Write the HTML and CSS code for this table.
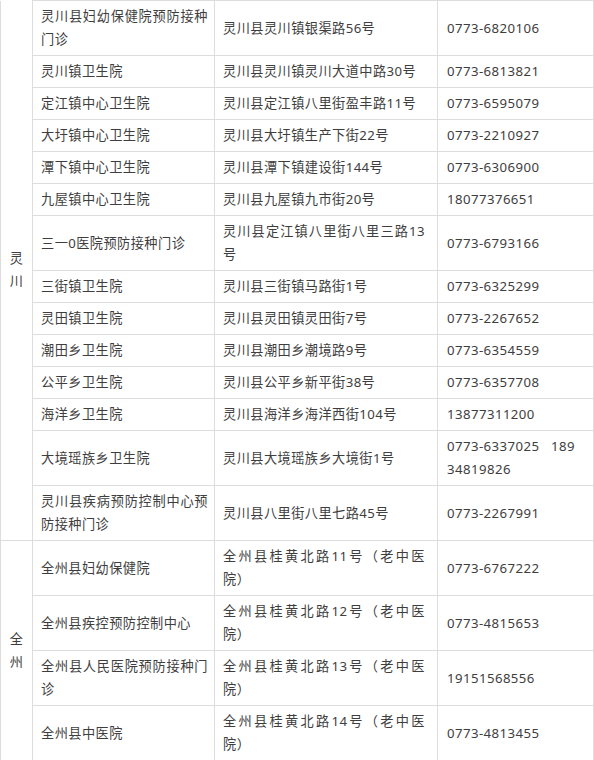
FILE: index.html
```html
<!DOCTYPE html>
<html lang="zh-CN">
<head>
<meta charset="utf-8">
<title>预防接种门诊</title>
<link rel="stylesheet" href="styles.css">
</head>
<body>
<table class="clinics">
  <colgroup>
    <col class="c-region">
    <col class="c-name">
    <col class="c-addr">
    <col class="c-phone">
  </colgroup>
  <tbody>
    <tr>
      <td class="region first" rowspan="14">灵<br>川</td>
      <td class="name">灵川县妇幼保健院预防接种门诊</td>
      <td class="addr">灵川县灵川镇银渠路56号</td>
      <td class="phone">0773-6820106</td>
    </tr>
    <tr><td class="name">灵川镇卫生院</td><td class="addr">灵川县灵川镇灵川大道中路30号</td><td class="phone">0773-6813821</td></tr>
    <tr><td class="name">定江镇中心卫生院</td><td class="addr">灵川县定江镇八里街盈丰路11号</td><td class="phone">0773-6595079</td></tr>
    <tr><td class="name">大圩镇中心卫生院</td><td class="addr">灵川县大圩镇生产下街22号</td><td class="phone">0773-2210927</td></tr>
    <tr><td class="name">潭下镇中心卫生院</td><td class="addr">灵川县潭下镇建设街144号</td><td class="phone">0773-6306900</td></tr>
    <tr><td class="name">九屋镇中心卫生院</td><td class="addr">灵川县九屋镇九市街20号</td><td class="phone">18077376651</td></tr>
    <tr><td class="name">三一0医院预防接种门诊</td><td class="addr">灵川县定江镇八里街八里三路13号</td><td class="phone">0773-6793166</td></tr>
    <tr><td class="name">三街镇卫生院</td><td class="addr">灵川县三街镇马路街1号</td><td class="phone">0773-6325299</td></tr>
    <tr><td class="name">灵田镇卫生院</td><td class="addr">灵川县灵田镇灵田街7号</td><td class="phone">0773-2267652</td></tr>
    <tr><td class="name">潮田乡卫生院</td><td class="addr">灵川县潮田乡潮境路9号</td><td class="phone">0773-6354559</td></tr>
    <tr><td class="name">公平乡卫生院</td><td class="addr">灵川县公平乡新平街38号</td><td class="phone">0773-6357708</td></tr>
    <tr><td class="name">海洋乡卫生院</td><td class="addr">灵川县海洋乡海洋西街104号</td><td class="phone">13877311200</td></tr>
    <tr><td class="name">大境瑶族乡卫生院</td><td class="addr">灵川县大境瑶族乡大境街1号</td><td class="phone">0773-6337025&nbsp;&nbsp;&nbsp;189<br>34819826</td></tr>
    <tr><td class="name">灵川县疾病预防控制中心预防接种门诊</td><td class="addr">灵川县八里街八里七路45号</td><td class="phone">0773-2267991</td></tr>
    <tr>
      <td class="region" rowspan="4">全<br>州</td>
      <td class="name">全州县妇幼保健院</td>
      <td class="addr">全州县桂黄北路11号（老中医院）</td>
      <td class="phone">0773-6767222</td>
    </tr>
    <tr><td class="name">全州县疾控预防控制中心</td><td class="addr">全州县桂黄北路12号（老中医院）</td><td class="phone">0773-4815653</td></tr>
    <tr><td class="name">全州县人民医院预防接种门诊</td><td class="addr">全州县桂黄北路13号（老中医院）</td><td class="phone">19151568556</td></tr>
    <tr><td class="name">全州县中医院</td><td class="addr">全州县桂黄北路14号（老中医院）</td><td class="phone">0773-4813455</td></tr>
  </tbody>
</table>
</body>
</html>
```
FILE: styles.css
```css
html, body {
  margin: 0;
  padding: 0;
  background: #ffffff;
}

.clinics {
  border-collapse: collapse;
  table-layout: fixed;
  width: 593px;
  font-family: "Noto Sans", "Noto Sans CJK SC", sans-serif;
  font-size: 13.2px;
  letter-spacing: 0.44px;
  line-height: 23px;
  color: #3e3e3e;
  text-spacing-trim: space-all;
}

.c-region { width: 32px; }
.c-name { width: 182px; }
.c-addr { width: 223px; }
.c-phone { width: 156px; }

.clinics td {
  border: 1px solid #dddddd;
  padding: 4px 6px 4px 8px;
  vertical-align: middle;
  text-align: justify;
  word-break: break-all;
  text-spacing-trim: space-all;
}

.clinics td.region {
  padding: 4px 0;
  text-align: center;
}

.clinics td.region.first {
  border-top: none;
}

.clinics td.addr {
  padding-right: 12px;
}

.clinics td.phone {
  text-align: left;
  padding-left: 9px;
}
```
